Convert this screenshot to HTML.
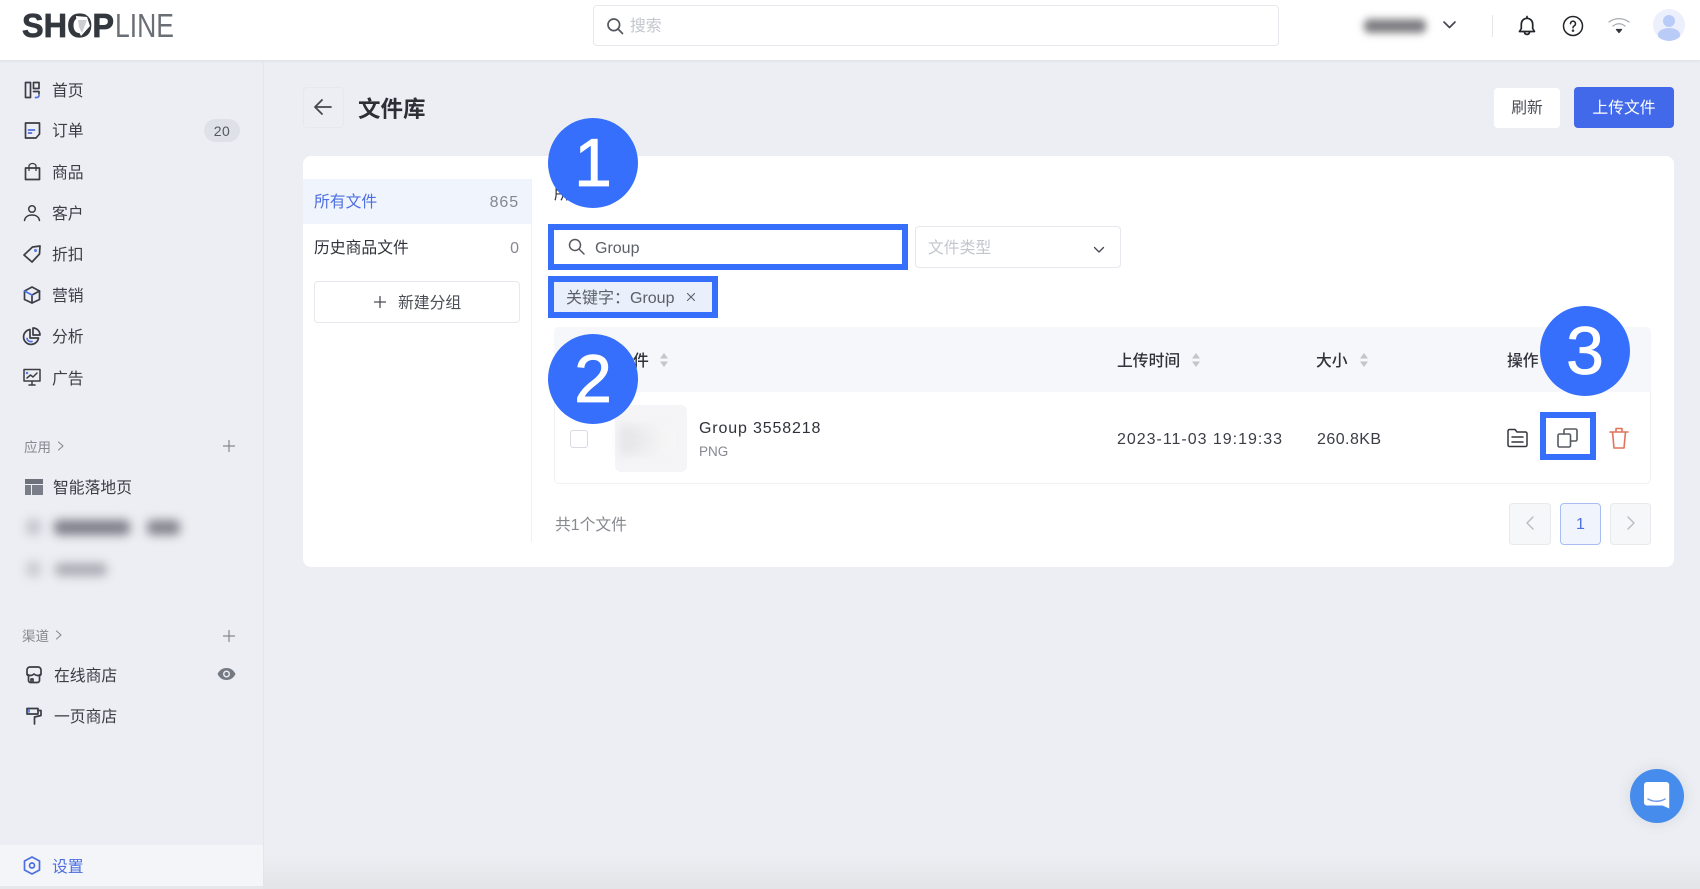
<!DOCTYPE html>
<html lang="zh-CN">
<head>
<meta charset="utf-8">
<title>文件库</title>
<style>
*{box-sizing:border-box}
html,body{margin:0;padding:0;background:#eceef3}
body{width:1700px;height:889px;position:relative;overflow:hidden;background:#eceef3;font-family:"Liberation Sans","Noto Sans CJK SC",sans-serif;color:#3a3d45;font-size:15.8px;filter:blur(.35px)}
.a{position:absolute}
.t{position:absolute;white-space:nowrap;line-height:20px;transform:translateY(-50%);margin-top:1.5px}
.ic{position:absolute;overflow:visible;fill:none;stroke:#3a3d45;stroke-width:1.7;stroke-linecap:round;stroke-linejoin:round}
.b6{position:absolute;border:6px solid #366ffc}
.circ{position:absolute;width:90px;height:90px;border-radius:50%;background:#366ffc;color:#fff;font-size:68px;line-height:90px;text-align:center;font-family:"Liberation Sans",sans-serif;-webkit-text-stroke:.8px #fff}
.blurt{position:absolute;filter:blur(5px);white-space:nowrap;border-radius:5px}
</style>
</head>
<body>
<!-- header -->
<div class="a" style="left:0;top:0;width:1700px;height:60px;background:#fff;box-shadow:0 1px 3px rgba(30,40,70,.08)"></div>
<svg class="a" style="left:20px;top:10px" width="160" height="32" viewBox="0 0 160 32">
<text x="2" y="27" font-family="Liberation Sans" font-weight="700" font-size="33" fill="#33383f" stroke="#33383f" stroke-width=".7" textLength="92" lengthAdjust="spacingAndGlyphs">SHOP</text>
<text x="95" y="27" font-family="Liberation Sans" font-size="33" fill="#6a6f75" textLength="59" lengthAdjust="spacingAndGlyphs">LINE</text>
<path d="M56 6l11 1 3 9-9 10-4-8z" fill="#fff"/>
<path d="M58 10l9 0-5 13-3-6z" fill="#9aa0a5" opacity=".5"/>
</svg>
<div class="a" style="left:593px;top:5px;width:686px;height:41px;background:#fff;border:1px solid #e6e8ed;border-radius:4px"></div>
<svg class="ic" style="left:606px;top:17px;stroke:#55585f" width="18" height="18" viewBox="0 0 18 18"><circle cx="7.8" cy="7.8" r="5.8"/><path d="M12 12l4.500 4.500"/></svg>
<div class="t" style="left:630px;top:25px;color:#c3c6cd">搜索</div>
<div class="blurt" style="left:1364px;top:19px;width:62px;height:14px;background:#7e7e82;filter:blur(4px)"></div>
<svg class="ic" style="left:1442px;top:20px;stroke:#44474e" width="15" height="10" viewBox="0 0 15 10"><path d="M2 2l5.500 5.500L13 2"/></svg>
<div class="a" style="left:1492px;top:15px;width:1px;height:22px;background:#e4e6ea"></div>
<svg class="ic" style="left:1517px;top:15px;stroke:#22252a" width="20" height="22" viewBox="0 0 20 22"><path d="M2.500 16.500h15l-1.800-3V9a5.700 5.700 0 0 0-11.400 0v4.500z"/><path d="M10 1.500v1.800M7.500 17.500a2.600 2.600 0 0 0 5 0"/></svg>
<svg class="ic" style="left:1562px;top:15px;stroke:#22252a;stroke-width:1.500" width="22" height="22" viewBox="0 0 22 22"><circle cx="11" cy="11" r="9.500"/><path d="M8.500 8.700a2.500 2.500 0 1 1 3.800 2.100c-.9.600-1.300 1-1.300 2"/><circle cx="11" cy="15.600" r=".5"/></svg>
<svg class="ic" style="left:1607px;top:17px;stroke:#a9acb2;stroke-width:1.300" width="24" height="18" viewBox="0 0 24 18"><path d="M2 5c6-4.500 14-4.500 20 0M6 9c4-3 8-3 12 0"/><path d="M9.500 12.500h5L12 15.500z" fill="#33363c" stroke="#33363c"/></svg>
<div class="a" style="left:1653px;top:9px;width:32px;height:32px;border-radius:50%;background:#ecf0fd;overflow:hidden">
<div class="a" style="left:10px;top:6px;width:12px;height:12px;border-radius:50%;background:#b9cbf7"></div>
<div class="a" style="left:5px;top:19px;width:22px;height:13px;border-radius:50% 50% 40% 40%;background:#b9cbf7"></div></div>

<!-- sidebar -->
<div class="a" style="left:263px;top:60px;width:1px;height:829px;background:#e4e6eb"></div>
<svg class="ic" style="left:25px;top:81px" width="16" height="18" viewBox="0 0 16 18"><path d="M.5 1.500h5v15h-5zM8.500 1.500h5.500v6H8.500z"/><path d="M8.500 10.500H14V13"/><path d="M14 14.500c0 1.500-1.500 2.300-3.500 2" stroke="#4d6fe0"/></svg>
<div class="t" style="left:52px;top:90px">首页</div>
<svg class="ic" style="left:25px;top:122px" width="15" height="17" viewBox="0 0 15 17"><path d="M.5 1h14v11l-3.500 4H.5z"/><path d="M3.500 8h6M3.500 11h3" stroke="#4d6fe0"/></svg>
<div class="t" style="left:52px;top:130.500px">订单</div>
<div class="a" style="left:204px;top:119px;width:36px;height:23px;border-radius:12px;background:#dfe1e8;text-align:center;line-height:24px;font-size:14px;color:#55585f;letter-spacing:.5px">20</div>
<svg class="ic" style="left:25px;top:163px" width="15" height="17" viewBox="0 0 15 17"><path d="M.5 5h14v11.500H.5z"/><path d="M4 7.500V3a3.500 2.500 0 0 1 7 0v4.500" stroke-width="1.300"/></svg>
<div class="t" style="left:52px;top:172px">商品</div>
<svg class="ic" style="left:24px;top:205px;stroke-width:1.500" width="16" height="16" viewBox="0 0 16 16"><circle cx="8" cy="4" r="3.300"/><path d="M.5 15.500c.5-3.500 3.500-5.500 7.500-5.500s7 2 7.500 5.500"/></svg>
<div class="t" style="left:52px;top:213px">客户</div>
<svg class="ic" style="left:23px;top:245px" width="18" height="18" viewBox="0 0 18 18"><path d="M1 10L9.500 2 17 1l-.5 8L9 17z"/><circle cx="12.500" cy="5.500" r=".6" stroke="#4d6fe0"/></svg>
<div class="t" style="left:52px;top:254px">折扣</div>
<svg class="ic" style="left:23px;top:286px" width="18" height="18" viewBox="0 0 18 18"><path d="M9 1l7.500 4v8.500L9 17l-7.500-3.500V5z"/><path d="M9 9l7.500-4M9 9v8"/><path d="M1.500 5L9 9" stroke="#4d6fe0"/></svg>
<div class="t" style="left:52px;top:295px">营销</div>
<svg class="ic" style="left:23px;top:327px" width="18" height="18" viewBox="0 0 18 18"><path d="M7 2.500a7.500 7.500 0 1 0 8.500 8.500H7z"/><path d="M10 1a7 7 0 0 1 7 7h-7z"/><path d="M4 11.500c.5 2 2.200 3.500 5 3" stroke="#4d6fe0"/></svg>
<div class="t" style="left:52px;top:336px">分析</div>
<svg class="ic" style="left:23px;top:368px;stroke-width:1.500" width="18" height="18" viewBox="0 0 18 18"><path d="M1 1.500h16V13H1zM9 13v4M6 17h6"/><path d="M4 10l3.500-3 2.500 2 4-4"/><circle cx="4" cy="5" r=".5" stroke="#4d6fe0"/></svg>
<div class="t" style="left:52px;top:378px">广告</div>

<div class="t" style="left:24px;top:446px;font-size:13.500px;color:#85888f">应用</div>
<svg class="ic" style="left:57px;top:441px;stroke:#85888f;stroke-width:1.100" width="8" height="10" viewBox="0 0 8 10"><path d="M1.500 1l4.500 4-4.500 4"/></svg>
<svg class="ic" style="left:223px;top:440px;stroke:#85888f;stroke-width:1.200" width="12" height="12" viewBox="0 0 12 12"><path d="M6 .5v11M.5 6h11"/></svg>
<div class="a" style="left:25px;top:479px;width:18px;height:5px;background:#6d717b"></div>
<div class="a" style="left:25px;top:485px;width:6px;height:10px;background:#7a7e88"></div>
<div class="a" style="left:32px;top:485px;width:11px;height:10px;background:#7a7e88"></div>
<div class="t" style="left:53px;top:487px">智能落地页</div>
<div class="blurt" style="left:26px;top:519px;width:15px;height:16px;background:#c4c6ce"></div>
<div class="blurt" style="left:54px;top:520px;width:76px;height:15px;background:#7d7f89"></div>
<div class="blurt" style="left:147px;top:520px;width:33px;height:15px;background:#83858d"></div>
<div class="blurt" style="left:26px;top:561px;width:15px;height:16px;background:#cacbd3"></div>
<div class="blurt" style="left:55px;top:563px;width:52px;height:13px;background:#aaacb4"></div>
<div class="t" style="left:22px;top:635px;font-size:13.500px;color:#85888f">渠道</div>
<svg class="ic" style="left:55px;top:630px;stroke:#85888f;stroke-width:1.100" width="8" height="10" viewBox="0 0 8 10"><path d="M1.500 1l4.500 4-4.500 4"/></svg>
<svg class="ic" style="left:223px;top:630px;stroke:#85888f;stroke-width:1.200" width="12" height="12" viewBox="0 0 12 12"><path d="M6 .5v11M.5 6h11"/></svg>
<svg class="ic" style="left:26px;top:666px" width="16" height="17" viewBox="0 0 16 17"><path d="M4 1h8a3 3 0 0 1 3 3v4.500L13.500 10v4.500a2 2 0 0 1-2 2h-7a2 2 0 0 1-2-2V10L1 8.500V4a3 3 0 0 1 3-3zM1 8c2.300 2 4.600 2 7 0 2.400 2 4.700 2 7 0M5 16.500V13h2v3.500"/></svg>
<div class="t" style="left:54px;top:675px">在线商店</div>
<svg class="a" style="left:217px;top:667px" width="19" height="14" viewBox="0 0 19 14"><path d="M.5 7C2.500 3 5.500 1 9.500 1s7 2 9 6c-2 4-5 6-9 6s-7-2-9-6z" fill="#757982"/><circle cx="9.500" cy="7" r="3.500" fill="#eceef3"/><circle cx="9.500" cy="7" r="2" fill="#757982"/></svg>
<svg class="ic" style="left:26px;top:707px" width="17" height="18" viewBox="0 0 17 18"><path d="M1 1.500h11V7H1z"/><path d="M12 3.500h3v5l-6.500 1.500V17"/><path d="M3 3v2" stroke="#4d6fe0"/></svg>
<div class="t" style="left:54px;top:716px">一页商店</div>
<div class="a" style="left:0;top:845px;width:263px;height:41px;background:#f4f5f9"></div>
<svg class="ic" style="left:23px;top:856px;stroke:#4d6fe0" width="18" height="19" viewBox="0 0 18 19"><path d="M9 1l7.500 4v9L9 18l-7.500-4V5z"/><circle cx="9" cy="9.500" r="2.500"/></svg>
<div class="t" style="left:52px;top:866px;color:#4d6fe0">设置</div>

<!-- page head -->
<div class="a" style="left:303px;top:87px;width:41px;height:41px;border:1px solid #e6e8ed;border-radius:4px;background:#edeef3"></div>
<svg class="ic" style="left:313px;top:98px;stroke:#45484f;stroke-width:1.800" width="20" height="18" viewBox="0 0 20 18"><path d="M18 9H2M9 2L2 9l7 7"/></svg>
<div class="t" style="left:358px;top:108px;font-size:22.500px;font-weight:700;color:#2c2f36;line-height:28px">文件库</div>
<div class="a" style="left:1494px;top:88px;width:66px;height:40px;background:#fff;border-radius:4px;text-align:center;line-height:42px;color:#4b4e55">刷新</div>
<div class="a" style="left:1574px;top:87px;width:100px;height:41px;background:#4169ea;border-radius:4px;text-align:center;line-height:43px;color:#fff">上传文件</div>

<!-- card -->
<div class="a" style="left:303px;top:156px;width:1371px;height:411px;background:#fff;border-radius:8px"></div>
<div class="a" style="left:303px;top:179px;width:228px;height:45px;background:#eff4fd"></div>
<div class="a" style="left:531px;top:179px;width:1px;height:363px;background:#f0f1f4"></div>
<div class="t" style="left:314px;top:201px;color:#4d6fe0">所有文件</div>
<div class="t" style="right:1181px;top:201px;color:#85888f;font-size:16px;letter-spacing:.9px">865</div>
<div class="t" style="left:314px;top:247px;color:#2f323a">历史商品文件</div>
<div class="t" style="right:1181px;top:247px;color:#85888f;font-size:16px">0</div>
<div class="a" style="left:314px;top:281px;width:206px;height:42px;border:1px solid #e6e8ed;border-radius:4px"></div>
<svg class="ic" style="left:374px;top:296px;stroke:#4b4e55;stroke-width:1.300" width="12" height="12" viewBox="0 0 12 12"><path d="M6 .5v11M.5 6h11"/></svg>
<div class="t" style="left:398px;top:302px;color:#4b4e55">新建分组</div>
<div class="t" style="left:554px;top:193px;color:#2f323a">所有文件</div>

<!-- filters -->
<div class="b6" style="left:548px;top:224px;width:360px;height:46px"></div>
<svg class="ic" style="left:568px;top:238px;stroke:#55585f;stroke-width:1.500" width="17" height="17" viewBox="0 0 17 17"><circle cx="7" cy="7" r="5.500"/><path d="M11 11l5 5"/></svg>
<div class="t" style="left:595px;top:247px;color:#5d6067;font-size:16px">Group</div>
<div class="a" style="left:915px;top:226px;width:206px;height:42px;border:1px solid #e6e8ed;border-radius:4px"></div>
<div class="t" style="left:928px;top:247px;color:#c3c6cd">文件类型</div>
<svg class="ic" style="left:1093px;top:246px;stroke:#44474e;stroke-width:1.300" width="12" height="8" viewBox="0 0 12 8"><path d="M1.500 1.500l4.500 4.500 4.500-4.500"/></svg>
<div class="b6" style="left:548px;top:276px;width:170px;height:42px;background:#e9effb"></div>
<div class="t" style="left:566px;top:297px;color:#5d6067;font-size:16px">关键字：Group</div>
<svg class="ic" style="left:687px;top:293px;stroke:#5d6067;stroke-width:1.100" width="8" height="8" viewBox="0 0 8 8"><path d="M.5.500l7 7M7.500.500l-7 7"/></svg>

<!-- table -->
<div class="a" style="left:554px;top:327px;width:1097px;height:157px;border:1px solid #f0f1f4;border-radius:5px"></div>
<div class="a" style="left:554px;top:327px;width:1097px;height:65px;background:#f6f7fa;border-radius:5px 5px 0 0"></div>
<div class="t" style="left:633px;top:360px;color:#2f323a;font-weight:500">件</div>
<svg class="a" style="left:659px;top:352px" width="10" height="16" viewBox="0 0 10 16"><path d="M5 1l4 5.500H1zM5 15L1 9.500h8z" fill="#c4c6cd"/></svg>
<div class="t" style="left:1117px;top:360px;color:#2f323a;font-weight:500">上传时间</div>
<svg class="a" style="left:1191px;top:352px" width="10" height="16" viewBox="0 0 10 16"><path d="M5 1l4 5.500H1zM5 15L1 9.500h8z" fill="#c4c6cd"/></svg>
<div class="t" style="left:1316px;top:360px;color:#2f323a;font-weight:500">大小</div>
<svg class="a" style="left:1359px;top:352px" width="10" height="16" viewBox="0 0 10 16"><path d="M5 1l4 5.500H1zM5 15L1 9.500h8z" fill="#c4c6cd"/></svg>
<div class="t" style="left:1507px;top:360px;color:#2f323a;font-weight:500">操作</div>
<div class="a" style="left:570px;top:430px;width:18px;height:18px;border:1.500px solid #d9dbe2;border-radius:3px;background:#fff"></div>
<div class="a" style="left:615px;top:405px;width:72px;height:67px;background:#f5f5f7;border-radius:6px"></div>
<div class="a" style="left:620px;top:425px;width:50px;height:30px;background:linear-gradient(90deg,#e3e3e6,#f7f7f8);filter:blur(5px)"></div>
<div class="t" style="left:699px;top:427px;color:#2f323a;font-size:16px;letter-spacing:.85px">Group 3558218</div>
<div class="t" style="left:699px;top:450px;color:#85888f;font-size:13.500px">PNG</div>
<div class="t" style="left:1117px;top:438px;color:#3a3d45;font-size:16px;letter-spacing:.98px">2023-11-03 19:19:33</div>
<div class="t" style="left:1317px;top:438px;color:#3a3d45;font-size:16px;letter-spacing:.45px">260.8KB</div>
<svg class="ic" style="left:1507px;top:428px;stroke:#33363c;stroke-width:1.500" width="21" height="20" viewBox="0 0 21 20"><path d="M1 3a1.500 1.500 0 0 1 1.500-1.500H8L10 4h8.500A1.500 1.500 0 0 1 20 5.500V17a1.500 1.500 0 0 1-1.500 1.500h-16A1.500 1.500 0 0 1 1 17z"/><path d="M5 9h11M5 14h11"/></svg>
<div class="b6" style="left:1540px;top:412px;width:56px;height:48px;background:#fff"></div>
<svg class="ic" style="left:1557px;top:428px;stroke:#55585f;stroke-width:1.600" width="21" height="20" viewBox="0 0 21 20"><rect x="1" y="6" width="12.500" height="13" rx="1.500"/><path d="M7 6V2.500A1.500 1.500 0 0 1 8.500 1h10A1.500 1.500 0 0 1 20 2.500v9a1.500 1.500 0 0 1-1.500 1.500h-5"/></svg>
<svg class="ic" style="left:1609px;top:427px;stroke:#e0745c;stroke-width:1.600" width="20" height="22" viewBox="0 0 20 22"><path d="M1 5h18M3.500 5l1.500 16h10l1.500-16M7 5V1.500h6V5"/></svg>

<div class="t" style="left:555px;top:524px;color:#85888f">共1个文件</div>
<div class="a" style="left:1509px;top:503px;width:42px;height:42px;background:#f6f7f9;border:1px solid #e8e9ed;border-radius:4px"></div>
<svg class="ic" style="left:1526px;top:516px;stroke:#b9bbc2;stroke-width:1.400" width="8" height="14" viewBox="0 0 8 14"><path d="M7 1L1 7l6 6"/></svg>
<div class="a" style="left:1560px;top:503px;width:41px;height:42px;background:#f0f4fd;border:1px solid #a9bef0;border-radius:4px;text-align:center;line-height:41px;color:#4d6fe0;font-size:16px">1</div>
<div class="a" style="left:1610px;top:503px;width:41px;height:42px;background:#f6f7f9;border:1px solid #e8e9ed;border-radius:4px"></div>
<svg class="ic" style="left:1627px;top:516px;stroke:#b9bbc2;stroke-width:1.400" width="8" height="14" viewBox="0 0 8 14"><path d="M1 1l6 6-6 6"/></svg>

<!-- number circles -->
<div class="circ" style="left:548px;top:118px">1</div>
<div class="circ" style="left:548px;top:334px">2</div>
<div class="circ" style="left:1540px;top:306px">3</div>

<!-- chat -->
<div class="a" style="left:1630px;top:769px;width:54px;height:54px;border-radius:50%;background:#468cec;box-shadow:0 0 14px rgba(60,70,100,.12)"></div>
<svg class="a" style="left:1644px;top:782px" width="26" height="28" viewBox="0 0 26 28"><path d="M3 0h20a3 3 0 0 1 3 3v24l-7-3H3a3 3 0 0 1-3-3V3a3 3 0 0 1 3-3z" fill="#fff" transform="scale(.97 .98)"/><path d="M4 17c5 3 12 3 17 0" fill="none" stroke="#6f9be6" stroke-width="1.500" stroke-linecap="round"/></svg>
<!-- bottom gradient -->
<div class="a" style="left:263px;top:855px;width:1437px;height:34px;background:linear-gradient(#eceef300,#e3e4e8)"></div>
<div class="a" style="left:0;top:886px;width:263px;height:3px;background:#e6e7eb"></div>
</body>
</html>
